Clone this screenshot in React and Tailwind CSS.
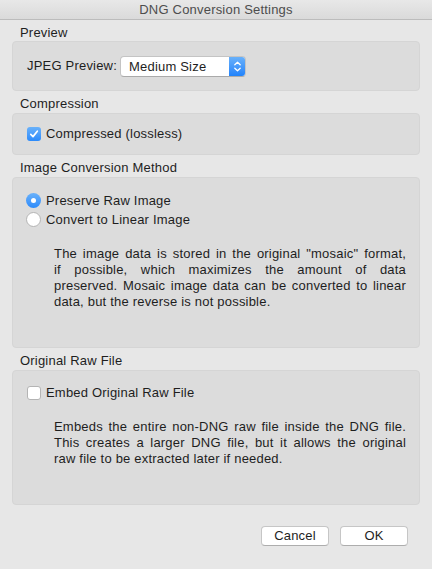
// DNG Conversion Settings dialog

const Label = ({ children, first }) => (
    <div className={`${first ? 'h-[21px]' : 'h-[22px]'} pt-[5px] pl-2 leading-[16px] text-[13px] text-[#1e1e1e]`}>
        {children}
    </div>
);

const Box = ({ className, children }) => (
    <div className={`rounded-[4px] bg-[#dcdcdc] border border-[#d5d5d5] ${className}`}>
        {children}
    </div>
);

// keeps the dialog's own line breaks; every line but the last is stretched to full width
const Justified = ({ lines }) => (
    <div className="mt-[17px] ml-[41px] mr-[13px] leading-[16px]">
        {lines.map((line, i) => (
            <span
                key={i}
                className={i < lines.length - 1 ? 'block text-justify [text-align-last:justify]' : 'block'}
            >
                {line}
            </span>
        ))}
    </div>
);

const Checkbox = ({ checked }) =>
    checked ? (
        <span className="w-[14px] h-[14px] rounded-[3px] bg-gradient-to-b from-[#69b1fa] to-[#2a8afb] flex items-center justify-center shrink-0">
            <svg width="10" height="10" viewBox="0 0 10 10">
                <path d="M1.8 5.4 L4 7.6 L8.3 2.2" fill="none" stroke="white" strokeWidth="1.7" strokeLinecap="round" strokeLinejoin="round" />
            </svg>
        </span>
    ) : (
        <span className="w-[14px] h-[14px] rounded-[3px] bg-white border border-[#b4b4b4] shrink-0" />
    );

const Radio = ({ checked }) =>
    checked ? (
        <span className="w-[15px] h-[15px] rounded-full bg-gradient-to-b from-[#69b1fa] to-[#2a8afb] flex items-center justify-center shrink-0">
            <span className="w-[5px] h-[5px] rounded-full bg-white" />
        </span>
    ) : (
        <span className="w-[15px] h-[15px] rounded-full bg-white border border-[#b4b4b4] shrink-0" />
    );

const Button = ({ children }) => (
    <button
        type="button"
        className="w-[68px] h-[20px] rounded-[4px] bg-white border border-[#c6c6c6] border-b-[#adadad] text-[13px] leading-[18px] text-[#1e1e1e] text-center"
    >
        {children}
    </button>
);

export default function App() {
    return (
        <div className="w-[432px] h-[569px] bg-[#e7e7e7] text-[13px] tracking-[0.2px] text-[#1e1e1e] overflow-hidden" style={{ fontFamily: '"Liberation Sans", Arial, sans-serif' }}>
            {/* Title bar */}
            <div className="h-[20px] bg-gradient-to-b from-[#e8e8e8] to-[#dadada] border-b border-[#bcbcbc] flex items-center justify-center text-[13px] text-[#4d4d4d]">
                DNG Conversion Settings
            </div>

            <div className="px-3">
                <Label first>Preview</Label>
                <Box className="h-[50px] flex items-center pl-[14px]">
                    <span className="w-[93px]">JPEG Preview:</span>
                    <div className="w-[126px] h-[21px] rounded-[4px] bg-white border border-[#c4c4c4] border-b-[#aaaaaa] flex items-stretch overflow-hidden">
                        <span className="flex-1 pl-[8px] leading-[19px]">Medium Size</span>
                        <span className="w-[17px] bg-gradient-to-b from-[#6cb3fa] to-[#1a80fb] flex items-center justify-center -my-px -mr-px rounded-r-[4px]">
                            <svg width="9" height="13" viewBox="0 0 9 13">
                                <path d="M1.8 4.8 L4.5 2.2 L7.2 4.8 M1.8 8.2 L4.5 10.8 L7.2 8.2" fill="none" stroke="white" strokeWidth="1.3" strokeLinecap="round" strokeLinejoin="round" />
                            </svg>
                        </span>
                    </div>
                </Box>

                <Label>Compression</Label>
                <Box className="h-[42px] flex items-center pl-[14px] gap-[5px]">
                    <Checkbox checked />
                    <span>Compressed (lossless)</span>
                </Box>

                <Label>Image Conversion Method</Label>
                <Box className="h-[171px] pt-[13px]">
                    <div className="pl-[13px]">
                        <div className="h-[19px] flex items-center gap-[5px]">
                            <Radio checked />
                            <span>Preserve Raw Image</span>
                        </div>
                        <div className="h-[19px] flex items-center gap-[5px]">
                            <Radio />
                            <span>Convert to Linear Image</span>
                        </div>
                    </div>
                    <Justified
                        lines={[
                            'The image data is stored in the original "mosaic" format,',
                            'if possible, which maximizes the amount of data',
                            'preserved. Mosaic image data can be converted to linear',
                            'data, but the reverse is not possible.',
                        ]}
                    />
                </Box>

                <Label>Original Raw File</Label>
                <Box className="h-[135px] pt-[12px]">
                    <div className="pl-[14px] h-[19px] flex items-center gap-[5px]">
                        <Checkbox />
                        <span>Embed Original Raw File</span>
                    </div>
                    <Justified
                        lines={[
                            'Embeds the entire non-DNG raw file inside the DNG file.',
                            'This creates a larger DNG file, but it allows the original',
                            'raw file to be extracted later if needed.',
                        ]}
                    />
                </Box>

                <div className="mt-[21px] pr-3 flex justify-end gap-[11px]">
                    <Button>Cancel</Button>
                    <Button>OK</Button>
                </div>
            </div>
        </div>
    );
}
